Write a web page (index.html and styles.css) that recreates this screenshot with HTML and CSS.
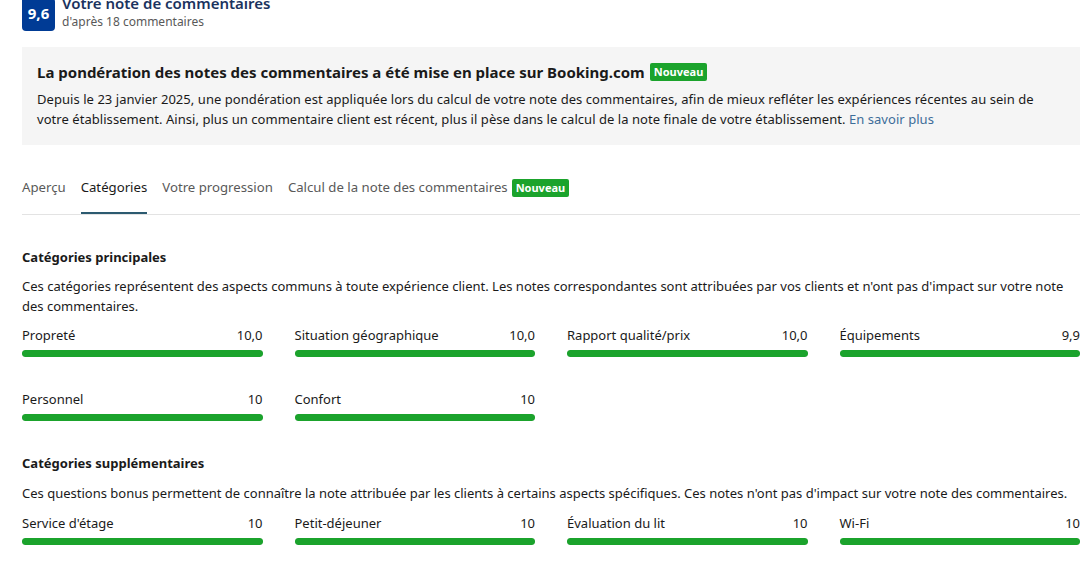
FILE: index.html
```html
<!DOCTYPE html>
<html lang="fr">
<head>
<meta charset="utf-8">
<link rel="stylesheet" href="styles.css">
</head>
<body>
<div class="page">
  <header class="score-head">
    <div class="score-badge">9,6</div>
    <div class="score-text">
      <div class="score-title">Votre note de commentaires</div>
      <div class="score-sub">d'après 18 commentaires</div>
    </div>
  </header>

  <section class="notice">
    <h2 class="notice-title">La pondération des notes des commentaires a été mise en place sur Booking.com <span class="badge">Nouveau</span></h2>
    <p class="notice-body">Depuis le 23 janvier 2025, une pondération est appliquée lors du calcul de votre note des commentaires, afin de mieux refléter les expériences récentes au sein de votre établissement. Ainsi, plus un commentaire client est récent, plus il pèse dans le calcul de la note finale de votre établissement. <a class="link" href="#">En savoir plus</a></p>
  </section>

  <nav class="tabs">
    <span class="tab">Aperçu</span>
    <span class="tab active">Catégories</span>
    <span class="tab">Votre progression</span>
    <span class="tab">Calcul de la note des commentaires <span class="badge">Nouveau</span></span>
  </nav>

  <section class="cat-section">
    <h3 class="cat-title">Catégories principales</h3>
    <p class="cat-desc">Ces catégories représentent des aspects communs à toute expérience client. Les notes correspondantes sont attribuées par vos clients et n'ont pas d'impact sur votre note des commentaires.</p>
    <div class="grid">
      <div class="item"><div class="item-row"><span>Propreté</span><span>10,0</span></div><div class="bar"><div class="fill" style="width:100%"></div></div></div>
      <div class="item"><div class="item-row"><span>Situation géographique</span><span>10,0</span></div><div class="bar"><div class="fill" style="width:100%"></div></div></div>
      <div class="item"><div class="item-row"><span>Rapport qualité/prix</span><span>10,0</span></div><div class="bar"><div class="fill" style="width:100%"></div></div></div>
      <div class="item"><div class="item-row"><span>Équipements</span><span>9,9</span></div><div class="bar"><div class="fill" style="width:100%"></div></div></div>
      <div class="item"><div class="item-row"><span>Personnel</span><span>10</span></div><div class="bar"><div class="fill" style="width:100%"></div></div></div>
      <div class="item"><div class="item-row"><span>Confort</span><span>10</span></div><div class="bar"><div class="fill" style="width:100%"></div></div></div>
    </div>
  </section>

  <section class="cat-section extra">
    <h3 class="cat-title">Catégories supplémentaires</h3>
    <p class="cat-desc">Ces questions bonus permettent de connaître la note attribuée par les clients à certains aspects spécifiques. Ces notes n'ont pas d'impact sur votre note des commentaires.</p>
    <div class="grid">
      <div class="item"><div class="item-row"><span>Service d'étage</span><span>10</span></div><div class="bar"><div class="fill" style="width:100%"></div></div></div>
      <div class="item"><div class="item-row"><span>Petit-déjeuner</span><span>10</span></div><div class="bar"><div class="fill" style="width:100%"></div></div></div>
      <div class="item"><div class="item-row"><span>Évaluation du lit</span><span>10</span></div><div class="bar"><div class="fill" style="width:100%"></div></div></div>
      <div class="item"><div class="item-row"><span>Wi-Fi</span><span>10</span></div><div class="bar"><div class="fill" style="width:100%"></div></div></div>
    </div>
  </section>
</div>
</body>
</html>
```
FILE: styles.css
```css
* { box-sizing: border-box; }
html, body { margin: 0; padding: 0; background: #fff; }
body {
  font-family: "Noto Sans", "Open Sans", sans-serif;
  font-size: 14px;
  color: #1a1a1a;
  overflow: hidden;
}
.page {
  padding: 0 12px 0 22px;
}
.score-head {
  display: flex;
  align-items: flex-start;
  gap: 7px;
  margin-top: -2px;
  height: 49px;
}
.score-badge {
  width: 33px;
  height: 33px;
  background: #003b95;
  color: #fff;
  font-weight: 700;
  font-size: 15px;
  display: flex;
  align-items: center;
  justify-content: center;
  padding-bottom: 4px;
  border-radius: 0 4px 4px 4px;
}
.score-text { margin-top: -5px; }
.score-title {
  font-size: 15px;
  font-weight: 600;
  color: #1b335e;
  line-height: 20px;
}
.score-sub {
  font-size: 12px;
  color: #595959;
  line-height: 16px;
  margin-top: 1px;
}
.notice {
  background: #f5f5f5;
  padding: 14px 28px 15px 15px;
  height: 98px;
}
.notice-title {
  margin: 0;
  font-size: 15px;
  font-weight: 700;
  line-height: 22px;
  color: #1a1a1a;
  display: flex;
  align-items: center;
  gap: 5px;
}
.badge {
  display: inline-flex;
  align-items: center;
  background: #1ba32c;
  color: #fff;
  font-size: 11px;
  font-weight: 700;
  height: 18px;
  padding: 0 4px;
  border-radius: 2px;
  line-height: 18px;
}
.notice-body {
  margin: 6px 0 0;
  font-size: 13px;
  line-height: 20px;
  letter-spacing: 0.05px;
}
.link { color: #3d6d99; text-decoration: none; }
.tabs {
  display: flex;
  gap: 15px;
  margin-top: 28px;
  border-bottom: 1px solid #e3e3e3;
  height: 42px;
}
.tab {
  font-size: 13.2px;
  color: #595959;
  height: 41px;
  padding-top: 4px;
  display: flex;
  align-items: flex-start;
  gap: 4px;
  line-height: 20px;
}
.tab.active {
  color: #1a1a1a;
  border-bottom: 2px solid #2c5a70;
}
.tab .badge { margin-top: 2px; }
.cat-section { margin-top: 32px; }
.cat-section.extra { margin-top: 32px; }
.cat-title {
  margin: 0;
  font-size: 13px;
  font-weight: 700;
  line-height: 20px;
}
.cat-desc {
  margin: 9px 0 0;
  font-size: 13px;
  line-height: 20px;
}
.extra .cat-desc { margin-top: 10px; }
.extra .grid { margin-top: 10px; }
.grid {
  display: grid;
  grid-template-columns: repeat(4, 1fr);
  column-gap: 32px;
  row-gap: 32px;
  margin-top: 9px;
}
.item-row {
  display: flex;
  justify-content: space-between;
  font-size: 13px;
  line-height: 20px;
}
.bar {
  margin-top: 5px;
  height: 7px;
  border-radius: 3px;
  background: #e6e6e6;
  overflow: hidden;
}
.fill {
  height: 100%;
  background: #1ba32c;
  border-radius: 3px;
}
```
